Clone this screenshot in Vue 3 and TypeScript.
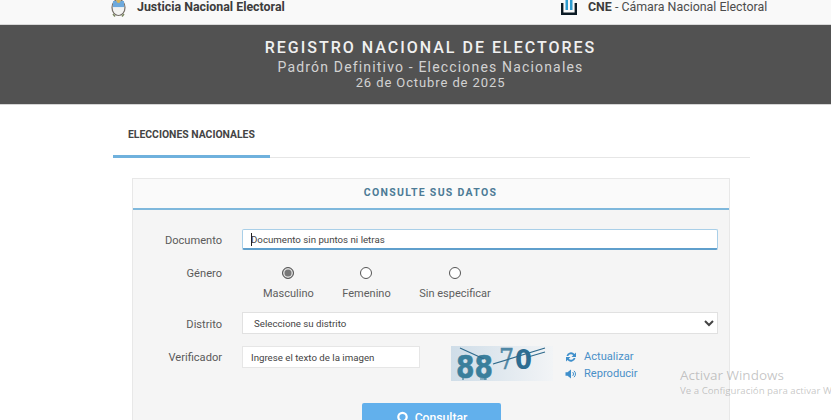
<script setup lang="ts">
// Padrón electoral: formulario de consulta
const generos = [
  { label: "Masculino", checked: true },
  { label: "Femenino", checked: false },
  { label: "Sin especificar", checked: false },
];
</script>

<template>
  <div class="page">
    <div class="topbar">
      <div class="brand brand-left">
        <svg class="escudo" width="17" height="17" viewBox="0 0 17 17">
          <ellipse cx="8.5" cy="7.5" rx="6.5" ry="8" fill="#e9edf0" stroke="#77706a" stroke-width="1.2" />
          <path d="M3 1h11v6H3z" fill="#6ea9dc" />
          <path d="M3 8h11c0 4-2.5 6.5-5.5 6.5S3 12 3 8z" fill="#f3f3f1" />
          <path d="M3 14l2 2.5M14 14l-2 2.5" stroke="#7d8a62" stroke-width="1.5" />
          <circle cx="8.5" cy="1" r="2" fill="#d8b45a" />
        </svg>
        <span class="brand-name"><b>Justicia Nacional Electoral</b></span>
      </div>
      <div class="brand brand-right">
        <svg class="cne" width="16" height="16" viewBox="0 0 16 16">
          <path d="M1.2 3v10.8h13.6V3" fill="none" stroke="#0b1a24" stroke-width="2.4" />
          <path d="M4.5 0H7v10H4.5zM9 0h2.5v10H9z" fill="#2e9ccf" />
        </svg>
        <span class="brand-name"><b>CNE</b> - Cámara Nacional Electoral</span>
      </div>
    </div>

    <header class="banner">
      <h1>REGISTRO NACIONAL DE ELECTORES</h1>
      <p class="sub">Padrón Definitivo - Elecciones Nacionales</p>
      <p class="fecha">26 de Octubre de 2025</p>
    </header>

    <main class="content">
      <nav class="tabs">
        <a class="tab">ELECCIONES NACIONALES</a>
      </nav>

      <section class="panel">
        <h2 class="panel-title">CONSULTE SUS DATOS</h2>
        <form class="form" @submit.prevent>
          <label class="lbl lbl-doc">Documento</label>
          <div class="doc-wrap">
            <input class="doc" type="text" placeholder="Documento sin puntos ni letras" />
            <span class="caret"></span>
          </div>

          <label class="lbl lbl-genero">Género</label>
          <div class="radios">
            <label v-for="g in generos" :key="g.label" class="radio">
              <input type="radio" name="genero" :checked="g.checked" />
              <span>{{ g.label }}</span>
            </label>
          </div>

          <label class="lbl lbl-distrito">Distrito</label>
          <select class="distrito">
            <option>Seleccione su distrito</option>
          </select>

          <label class="lbl lbl-verif">Verificador</label>
          <div class="verif">
            <input class="captcha-input" type="text" placeholder="Ingrese el texto de la imagen" />
            <svg class="captcha" width="102" height="35" viewBox="0 0 102 35">
              <defs>
                <linearGradient id="capbg" x1="0" x2="1" y1="0" y2="0">
                  <stop offset="0" stop-color="#cfdde8" />
                  <stop offset="1" stop-color="#f2f4f6" />
                </linearGradient>
              </defs>
              <rect width="102" height="35" fill="url(#capbg)" />
              <text x="5" y="32" class="cap-8" textLength="37" lengthAdjust="spacingAndGlyphs">88</text>
              <text x="48" y="23" class="cap-7" textLength="15" lengthAdjust="spacingAndGlyphs">7</text>
              <text x="64" y="23" class="cap-0" textLength="17" lengthAdjust="spacingAndGlyphs">0</text>
              <path d="M9 2l24 11M42 18L94 2M77 11l17-5" stroke="#2f6a8c" stroke-width="1.2" fill="none" />
              <path d="M12 31v3M34 31v3M29 33h7" stroke="#3a7f9c" stroke-width="1.2" fill="none" />
            </svg>
            <div class="captcha-links">
              <a class="link">
                <svg width="12" height="12" viewBox="0 0 12 12">
                  <path d="M1.5 5a4.600 4.600 0 0 1 8-2L11 1.500V6H6.500l1.700-1.700A2.800 2.800 0 0 0 3.300 5zM10.500 7a4.600 4.600 0 0 1-8 2L1 10.500V6h4.500L3.800 7.700A2.800 2.800 0 0 0 8.700 7z" fill="#3f8fcb" />
                </svg>
                Actualizar
              </a>
              <a class="link">
                <svg width="12" height="12" viewBox="0 0 12 12">
                  <path d="M0.5 4.300h2L6 1.500v9L2.500 7.700h-2z" fill="#3f8fcb" />
                  <path d="M7.5 4a2.500 2.500 0 0 1 0 4M9 2.800a4.200 4.200 0 0 1 0 6.400" stroke="#3f8fcb" fill="none" />
                </svg>
                Reproducir
              </a>
            </div>
          </div>

          <div class="actions">
            <button class="btn" type="submit">
              <svg width="13" height="13" viewBox="0 0 13 13">
                <circle cx="6.5" cy="6" r="4.2" fill="none" stroke="#fff" stroke-width="2.2" />
                <path d="M8.5 10l1.5 2.500" stroke="#fff" stroke-width="2.2" />
              </svg>
              Consultar
            </button>
          </div>
        </form>
      </section>
    </main>

    <div class="watermark">
      <div class="wm-title">Activar Windows</div>
      <div class="wm-sub">Ve a Configuración para activar Windows.</div>
    </div>
  </div>
</template>

<style>
html,
body {
  margin: 0;
  height: 420px;
  overflow: hidden;
  background: #fff;
}
</style>

<style scoped>
.page {
  width: 831px;
  height: 420px;
  overflow: hidden;
  position: relative;
  font-family: Roboto, "Liberation Sans", sans-serif;
  color: #555;
}

.topbar {
  height: 24px;
  background: #f9f9f9;
  border-bottom: 1px solid #d9d9d9;
  display: flex;
  align-items: flex-start;
  padding-left: 110px;
  overflow: hidden;
}

.brand {
  display: flex;
  align-items: flex-start;
}

.brand-left {
  width: 451px;
}

.escudo {
  margin-right: 10px;
}

.cne {
  margin-right: 11px;
}

.brand-name {
  font-size: 12.4px;
  line-height: 14px;
  color: #4c4c4c;
}

.brand-name b {
  font-weight: 700;
  color: #3c3c3c;
}

.banner {
  height: 80px;
  box-sizing: border-box;
  background: #525252;
  border-bottom: 1px solid #d5d5d5;
  text-align: center;
  padding: 14px 0 0 30px;
}

.banner h1 {
  margin: 0;
  font-size: 16px;
  line-height: 18px;
  font-weight: 500;
  letter-spacing: 2px;
  color: #f0f0f0;
}

.sub {
  margin: 2px 0 0;
  font-size: 14px;
  line-height: 16px;
  letter-spacing: 1.17px;
  color: #d2d2d2;
}

.fecha {
  margin: 0;
  font-size: 13px;
  line-height: 15px;
  letter-spacing: 0.9px;
  color: #d2d2d2;
}

.tabs {
  margin: 0 81px 0 113px;
  height: 52px;
  border-bottom: 1px solid #e6e6e6;
  display: flex;
}

.tab {
  width: 157px;
  height: 53px;
  box-sizing: border-box;
  border-bottom: 3px solid #6fb1dd;
  padding: 23px 0 0 15px;
  font-size: 10.4px;
  line-height: 14px;
  font-weight: 700;
  color: #444;
}

.panel {
  margin: 20px 0 0 132px;
  width: 598px;
  box-sizing: border-box;
  background: #f5f5f5;
  border: 1px solid #e8e8e8;
  border-bottom: 0;
}

.panel-title {
  margin: 0;
  height: 29px;
  padding-right: 1px;
  background: #fafafa;
  border-bottom: 2px solid #7fb8dc;
  text-align: center;
  font-size: 10.5px;
  line-height: 28px;
  font-weight: 700;
  letter-spacing: 1.3px;
  color: #4d7b96;
}

.form {
  display: grid;
  grid-template-columns: 89px 476px;
  column-gap: 20px;
  padding-top: 19px;
  align-items: start;
}

.lbl {
  justify-self: end;
  font-size: 11.1px;
  line-height: 20px;
  color: #5a5a5a;
}

.lbl-doc {
  margin-top: 3px;
  line-height: 18px;
}

.doc-wrap {
  position: relative;
  height: 21px;
}

.doc {
  display: block;
  height: 21px;
  width: 476px;
  box-sizing: border-box;
  border: 1px solid #a9cfe8;
  border-bottom: 2px solid #5f9fcc;
  border-radius: 2px;
  background: #fff;
  padding: 0 8px;
  font: 9.7px Roboto, sans-serif;
  outline: none;
}

.caret {
  position: absolute;
  left: 9px;
  top: 4px;
  width: 1px;
  height: 13px;
  background: #222;
}

.doc::placeholder,
.captcha-input::placeholder {
  color: #444;
  opacity: 1;
}

.lbl-genero {
  margin-top: 14px;
}

.radios {
  margin-top: 17px;
  display: flex;
  padding-left: 21px;
}

.radio {
  display: flex;
  flex-direction: column;
  align-items: center;
  gap: 8px;
  font-size: 11px;
  line-height: 14px;
  color: #5e5e5e;
  margin-right: 28.5px;
}

.radio input {
  appearance: none;
  margin: 0;
  width: 12px;
  height: 12px;
  border: 1.5px solid #555;
  border-radius: 50%;
  box-sizing: border-box;
  background: #fff;
}

.radio input:checked {
  background: #777;
  box-shadow: inset 0 0 0 1.5px #ddd;
}

.lbl-distrito {
  margin-top: 14px;
}

.distrito {
  margin-top: 11px;
  width: 476px;
  height: 22px;
  border: 1px solid #e1e1e1;
  background: #fff;
  padding: 0 7px;
  font: 9.7px Roboto, sans-serif;
  color: #444;
  outline: none;
}

.lbl-verif {
  margin-top: 13px;
}

.verif {
  margin-top: 11px;
  display: flex;
  align-items: flex-start;
}

.captcha-input {
  width: 178px;
  height: 22px;
  box-sizing: border-box;
  border: 1px solid #e6e6e6;
  background: #fff;
  padding: 0 8px;
  font: 9.7px Roboto, sans-serif;
  outline: none;
}

.captcha {
  margin-left: 31px;
}

.cap-8 {
  font: 700 32px "DejaVu Sans", sans-serif;
  fill: #3a7f9c;
  stroke: #3a7f9c;
  stroke-width: 0.6;
}

.cap-7 {
  font: 400 27px "DejaVu Serif", serif;
  fill: #4f87a5;
  stroke: #4f87a5;
  stroke-width: 0.5;
}

.cap-0 {
  font: 700 26px "DejaVu Sans", sans-serif;
  fill: #2e6d92;
}

.captcha-links {
  margin-left: 12px;
  padding-top: 3px;
  display: flex;
  flex-direction: column;
  gap: 2px;
}

.link {
  display: flex;
  align-items: center;
  gap: 7px;
  font-size: 11.1px;
  line-height: 15px;
  color: #4a90c8;
}

.actions {
  grid-column: 1 / 3;
  margin-top: 22px;
  padding-left: 229px;
}

.btn {
  width: 139px;
  height: 29px;
  border: 0;
  border-radius: 2px;
  background: #62b0ec;
  color: #fff;
  font: 500 12.2px Roboto, sans-serif;
  display: flex;
  align-items: center;
  justify-content: center;
  gap: 6px;
}

.watermark {
  position: absolute;
  left: 680px;
  top: 367px;
  white-space: nowrap;
  font-family: "Open Sans", sans-serif;
  color: rgba(120, 120, 120, 0.42);
  pointer-events: none;
}

.wm-title {
  font-size: 13.5px;
  line-height: 16px;
}

.wm-sub {
  font-size: 9.7px;
  line-height: 16px;
}
</style>
